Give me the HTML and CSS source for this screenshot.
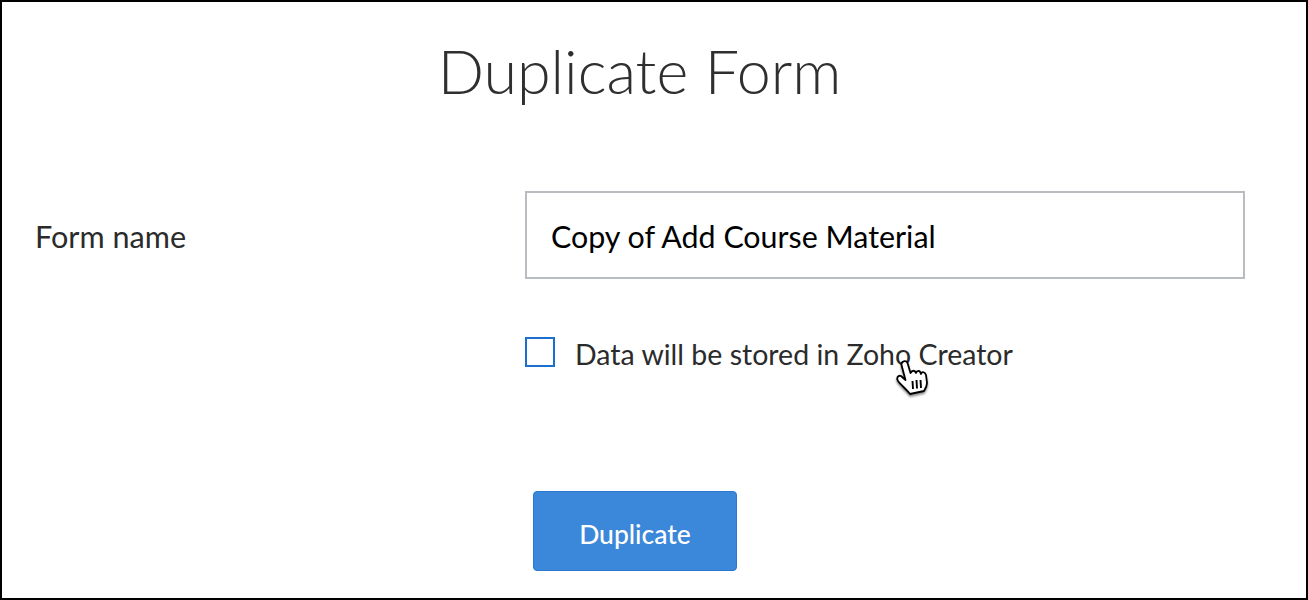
FILE: index.html
```html
<!DOCTYPE html>
<html lang="en">
  <head>
    <meta charset="UTF-8" />
    <title>Duplicate Form</title>
    <link rel="stylesheet" href="styles.css">
  </head>
  <body>
    <div class="dialog">
      <h1 class="dialog__title">Duplicate Form</h1>
      <div class="field">
        <label class="field__label" for="form-name">Form name</label>
        <input class="field__input" id="form-name" type="text" value="Copy of Add Course Material" />
      </div>
      <div class="check">
        <span class="check__box"></span>
        <span class="check__text">Data will be stored in Zoho Creator</span>
        <svg class="cursor" viewBox="30 25 45 45" width="45" height="45">
          <defs>
            <filter id="cursor-shadow" x="-30%" y="-30%" width="160%" height="160%">
              <feDropShadow dx="0" dy="2" stdDeviation="1.2" flood-color="#000" flood-opacity="0.45" />
            </filter>
          </defs>
          <path
            d="M41.5 35 C41 31 46 30 47.5 33 L50.5 43 C52 40 55 40 56 43 C57 40 60 40 61 44 C62 41 65 42 66 45 L67 53 C67 56 66 58 64 61 L50 64 C47 60 41 55 38 51 C36 48 38 45 41 46 L45.5 50 Z"
            fill="#fff"
            stroke="#000"
            stroke-width="1.8"
            stroke-linejoin="round"
            filter="url(#cursor-shadow)"
          />
          <path d="M52.5 51 L53 59 M56.5 50 L57 58.5 M60.5 50 L61 58" fill="none" stroke="#000" stroke-width="1.9" />
        </svg>
      </div>
      <button class="dialog__btn" type="button">Duplicate</button>
    </div>
  </body>
</html>
```

FILE: styles.css
```css
* {
  box-sizing: border-box;
  margin: 0;
  padding: 0;
}
body {
  background: #fff;
  font-family: Lato, sans-serif;
  color: #2b2b2b;
}
.dialog {
  width: 1308px;
  height: 600px;
  border: 2px solid #000;
  display: flex;
  flex-direction: column;
  overflow: hidden;
}
.dialog__title {
  font-size: 61px;
  font-weight: 300;
  line-height: 74px;
  margin-top: 32px;
  padding-right: 29px;
  text-align: center;
  color: #2f2f2f;
}
.field {
  display: flex;
  align-items: center;
  margin-top: 83px;
  padding-left: 33px;
}
.field__label {
  width: 490px;
  font-size: 30.6px;
  line-height: 36px;
  margin-top: 4px;
}
.field__input {
  width: 720px;
  height: 88px;
  border: 2px solid #b9bcc0;
  padding: 1px 24px 0;
  font: 400 30.4px Lato, sans-serif;
  color: #000;
  outline: none;
}
.check {
  position: relative;
  display: flex;
  align-items: center;
  gap: 20px;
  margin-top: 58px;
  margin-left: 523px;
}
.check__box {
  width: 30px;
  height: 30px;
  margin-bottom: 4px;
  border: 2px solid #1a6fcf;
}
.check__text {
  font-size: 28.5px;
  line-height: 34px;
}
.cursor {
  position: absolute;
  left: 365px;
  top: 18px;
}
.dialog__btn {
  width: 204px;
  height: 80px;
  margin-top: 120px;
  margin-left: 531px;
  padding-top: 5px;
  background: #3b87da;
  border: 1px solid #2b78d0;
  border-radius: 4px;
  color: #fff;
  font: 500 26.5px Lato, sans-serif;
}
```
